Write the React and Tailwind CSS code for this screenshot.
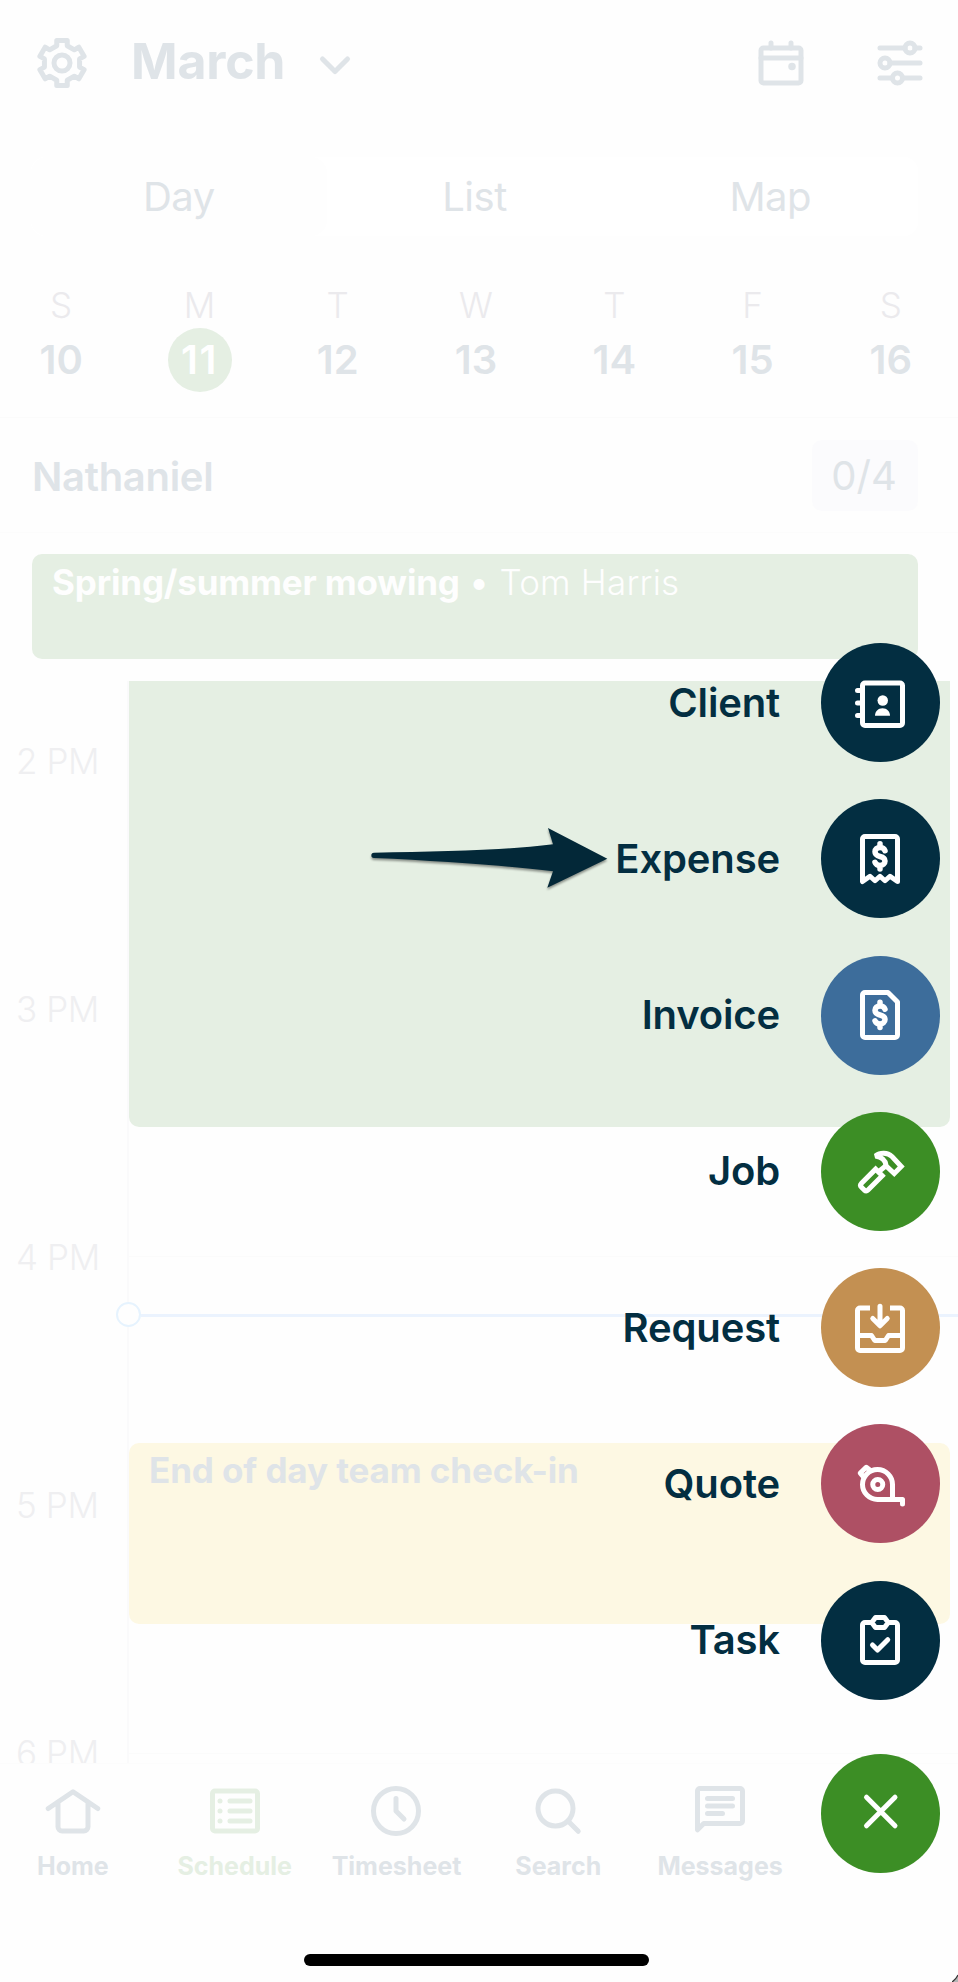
import React, { useState } from "react";

// Shared 24x24 stroke icon
const Icon = ({ children, className = "" }) => (
  <svg
    viewBox="0 0 24 24"
    className={`w-[60px] h-[60px] shrink-0 ${className}`}
    fill="none"
    stroke="currentColor"
    strokeWidth="2"
    strokeLinecap="round"
    strokeLinejoin="round"
  >
    {children}
  </svg>
);

const DOLLAR =
  "M12 6.900v1.400M14 9.700C13.700 8.900 13 8.400 12 8.400c-1.200 0-2 .7-2 1.700 0 1.200.8 1.600 2 1.900s2 .8 2 1.800c0 1.100-.9 1.800-2 1.800-1 0-1.700-.5-2-1.300M12 15.700V17";

const SettingsIcon = () => (
  <Icon>
    <g transform="translate(12 12)">
      <path d="M-2.1-6.9V-9H2.1V-6.9L4.93-5.27 6.74-6.32 8.84-2.68 7.03-1.63V1.63L8.84 2.68 6.74 6.32 4.93 5.27 2.1 6.9V9H-2.1V6.9L-4.93 5.27-6.74 6.32-8.84 2.68-7.03 1.63V-1.63L-8.84-2.68-6.74-6.32-4.93-5.27z" />
      <circle r="3.2" />
    </g>
  </Icon>
);

const CalendarIcon = () => (
  <Icon>
    <rect x="4" y="6" width="16" height="14" rx="1" />
    <path d="M4 10h16M8 4v2M16 4v2" />
    <circle cx="16.4" cy="13.4" r="1.5" fill="currentColor" stroke="none" />
  </Icon>
);

const FiltersIcon = () => (
  <Icon>
    <path d="M4 6h10M18 6h2M8 12h12M4 18h5M13 18h7" />
    <circle cx="16" cy="6" r="2" />
    <circle cx="6" cy="12" r="2" />
    <circle cx="11" cy="18" r="2" />
  </Icon>
);

const navItems = [
  {
    label: "Home",
    icon: (
      <Icon>
        <path d="M2.1 11 12 4.300 21.900 11M6 8.700V18.300A1.700 1.700 0 0 0 7.700 20h8.600a1.700 1.700 0 0 0 1.700-1.700V8.700" />
      </Icon>
    ),
  },
  {
    label: "Schedule",
    icon: (
      <Icon>
        <rect x="3" y="4" width="18" height="16" rx="1" />
        <path d="M6 8h0M6 12h0M6 16h0M10 8h8M10 12h8M10 16h8" />
      </Icon>
    ),
  },
  {
    label: "Timesheet",
    icon: (
      <Icon>
        <circle cx="12" cy="12" r="9" />
        <path d="M12 7v5l3.200 3.200" />
      </Icon>
    ),
  },
  {
    label: "Search",
    icon: (
      <Icon>
        <circle cx="11" cy="11" r="7" />
        <path d="M16 16l4.100 4.100" />
      </Icon>
    ),
  },
  {
    label: "Messages",
    icon: (
      <Icon>
        <path d="M3 19.500V4a1 1 0 0 1 1-1h16a1 1 0 0 1 1 1v12a1 1 0 0 1-1 1H5.500z" />
        <path d="M7 7h10M7 10h10M7 13h6" />
      </Icon>
    ),
  },
];

const actions = [
  {
    label: "Client",
    color: "bg-[#032e41]",
    icon: (
      <Icon className="mr-px">
        <rect x="5" y="4" width="16" height="17" rx="1" />
        <path d="M3 7h2M3 12h2M3 17h2" />
        <g fill="currentColor" stroke="none">
          <circle cx="13.100" cy="11" r="2.100" />
          <path d="M10 17.100c0-1.700 1.200-3 3-3s3 1.300 3 3z" />
        </g>
      </Icon>
    ),
  },
  {
    label: "Expense",
    color: "bg-[#032e41]",
    icon: (
      <Icon className="mr-px">
        <path d="M5 21V4a1 1 0 0 1 1-1h12a1 1 0 0 1 1 1v17l-3-2.100-2 1.800-2-1.800-2 1.800-2-1.800z" />
        <path d={DOLLAR} strokeWidth="2.200" transform="translate(0 -1)" />
      </Icon>
    ),
  },
  {
    label: "Invoice",
    color: "bg-[#3d6d9b]",
    icon: (
      <Icon className="mr-px">
        <path d="M5 4a1 1 0 0 1 1-1h9.200L19 6.800V20a1 1 0 0 1-1 1H6a1 1 0 0 1-1-1z" />
        <path d={DOLLAR} strokeWidth="2.200" />
      </Icon>
    ),
  },
  {
    label: "Job",
    color: "bg-[#3c8e25]",
    icon: (
      <Icon className="mr-px">
        <g transform="translate(12 12)" strokeLinejoin="miter">
          <path d="M-1.750-.75-7.400 4.900Q-8.200 5.700-7.400 6.500L-6.300 7.600Q-5.500 8.300-4.800 7.600L.9 1.900z" />
          <path d="M-.2 0 2.500-2.200" strokeLinecap="butt" />
          <path
            strokeMiterlimit="2"
            d="M-1.800-6C.2-7.600 3-7.400 4.800-5.800L8.500-1.800 5.700 1 2.500-2C2.300-4 .8-5.600-1.800-6z"
          />
        </g>
      </Icon>
    ),
  },
  {
    label: "Request",
    color: "bg-[#c39052]",
    icon: (
      <Icon className="mr-px">
        <path
          strokeLinecap="butt"
          d="M8 4H4a1 1 0 0 0-1 1v15a1 1 0 0 0 1 1h16a1 1 0 0 0 1-1V5a1 1 0 0 0-1-1h-4M3 15h5.600l1.300 2h4.200l1.300-2H21"
        />
        <path d="M12 3.300v7.700M9.100 8.200l2.900 2.900 2.900-2.900" />
      </Icon>
    ),
  },
  {
    label: "Quote",
    color: "bg-[#ae5064]",
    icon: (
      <Icon className="mr-px">
        <path d="M17 18.200v-6a6 6 0 1 0-6 6h10V20" />
        <circle cx="11.100" cy="12.200" r="2" />
        <path d="M5.300 9 4.100 7.600 6.500 5.300 7.900 6.400" />
      </Icon>
    ),
  },
  {
    label: "Task",
    color: "bg-[#032e41]",
    icon: (
      <Icon className="mr-px">
        <path d="M8.700 5H6a1 1 0 0 0-1 1v14a1 1 0 0 0 1 1h12a1 1 0 0 0 1-1V6a1 1 0 0 0-1-1h-2.700" />
        <path d="M10.200 3h3.600L15.300 5 13.800 7h-3.600L8.700 5z" />
        <path d="M9 14l2 2 4.100-4.100" />
      </Icon>
    ),
  },
];

const days = [
  ["S", 10],
  ["M", 11],
  ["T", 12],
  ["W", 13],
  ["T", 14],
  ["F", 15],
  ["S", 16],
];

const hours = ["2 PM", "3 PM", "4 PM", "5 PM", "6 PM"];

const App = () => {
  const [view, setView] = useState("Day");
  const [selected, setSelected] = useState(11);
  const [tab, setTab] = useState("Schedule");

  return (
    <div className="relative w-[958px] h-[1982px] overflow-hidden flex flex-col bg-[#fefefe] text-[#dfe4e8] font-['Inter',sans-serif]">
      {/* Header */}
      <header className="h-[157px] shrink-0 flex items-start pt-[33px] pl-[32px] pr-[28px]">
        <SettingsIcon />
        <h1 className="-mt-[2px] ml-[39px] text-[50px] leading-[60px] font-bold tracking-[-0.2px] w-[158px] whitespace-nowrap">
          March
        </h1>
        <Icon className="ml-[16px]">
          <path d="M7 10.400l5 5 5-5" />
        </Icon>
        <div className="ml-auto flex gap-[59px]">
          <CalendarIcon />
          <FiltersIcon />
        </div>
      </header>

      {/* View switcher */}
      <div className="ml-[31px] mr-[40px] h-[79px] shrink-0 flex rounded-[14px] bg-white">
        {["Day", "List", "Map"].map((name) => (
          <button
            key={name}
            onClick={() => setView(name)}
            className={`flex-1 rounded-[16px] text-[40px] leading-[79px] font-normal tracking-[-0.5px] ${
              view === name ? "bg-[#fefefe]" : ""
            }`}
          >
            {name}
          </button>
        ))}
      </div>

      {/* Week strip */}
      <div className="-ml-[8px] w-[968px] h-[182px] shrink-0 flex pt-[47px] border-b border-[#fbfbfb]">
        {days.map(([letter, num]) => (
          <button
            key={num}
            onClick={() => setSelected(num)}
            className="flex-1 flex flex-col items-center"
          >
            <span className="text-[35px] leading-[44px] font-light text-[#ebeaed]">{letter}</span>
            <span
              className={`mt-px size-[64px] rounded-full text-[40px] leading-[64px] font-semibold ${
                selected === num ? "ml-px pr-px tracking-[1.5px] bg-[#e5efe3] text-white" : ""
              }`}
            >
              {num}
            </span>
          </button>
        ))}
      </div>

      {/* Assignee */}
      <div className="h-[115px] shrink-0 flex items-center justify-between pl-[32px] pr-[40px] border-b border-[#fcfcfc]">
        <span className="mt-[3px] text-[40px] leading-[48px] font-semibold tracking-[-0.3px]">Nathaniel</span>
        <span className="w-[106px] h-[71px] rounded-[10px] bg-[#fbfbfd] pr-[2px] text-center text-[40px] leading-[71px]">
          0/4
        </span>
      </div>

      {/* All day visit */}
      <div className="mt-[21px] ml-[32px] mr-[40px] h-[105px] shrink-0 rounded-[10px] bg-[#e5efe3] text-[#fefefe] px-[20px] pt-[7px] text-[35px] leading-[42px] whitespace-nowrap">
        <span className="font-bold tracking-[-0.17px]">Spring/summer mowing</span>
        <span className="ml-[11px] mr-[12px] font-bold">•</span>
        <span className="font-light tracking-[0.2px]">Tom Harris</span>
      </div>

      {/* Day timeline */}
      <main className="mt-[22px] h-[1082px] shrink-0 overflow-hidden flex">
        <div className="w-[129px] shrink-0 pt-[59px] border-r-2 border-[#fafafb] text-[35px] leading-[42px] font-light tracking-[-0.4px] text-[#efeff1]">
          {hours.map((hour) => (
            <div key={hour} className="h-[248px] pl-[16px] whitespace-nowrap">
              {hour}
            </div>
          ))}
        </div>
        <div className="relative flex-1 pr-[8px] flex flex-col">
          <div className="h-[446px] shrink-0 rounded-b-[10px] bg-[#e5efe3]" />
          <div className="h-[130px] shrink-0 border-b border-[#fbfbfb] -mr-[8px]" />
          <div className="mt-[186px] h-[181px] shrink-0 rounded-[10px] bg-[#fdf8e3] px-[20px] pt-[6px] text-[35px] leading-[42px] font-bold tracking-[-0.1px] whitespace-nowrap">
            End of day team check-in
          </div>
          <div className="h-[130px] shrink-0 border-b border-[#fbfbfb] -mr-[8px]" />
          {/* current time marker */}
          <div className="absolute -left-[13px] right-0 top-[621px] flex items-center">
            <span className="size-[25px] rounded-full border-[2.5px] border-[#e6f3fe] bg-[#fefefe]" />
            <span className="flex-1 h-[3px] mt-[2px] bg-[#ebf3fe]" />
          </div>
        </div>
      </main>

      {/* Bottom tabs */}
      <nav className="h-[191px] shrink-0 -ml-[8px] flex pt-[17px] border-t border-[#fcfcfc]">
        {navItems.map((item) => (
          <button
            key={item.label}
            onClick={() => setTab(item.label)}
            className={`w-[161.8px] flex flex-col items-center ${
              tab === item.label ? "text-[#e5efe3]" : ""
            }`}
          >
            {item.icon}
            <span className="mt-[10px] text-[25px] leading-[30px] font-bold">{item.label}</span>
          </button>
        ))}
      </nav>
      <div className="w-[345px] h-[12px] shrink-0 ml-[304px] rounded-full bg-black" />

      {/* Arrow pointing at the Expense action */}
      <svg
        viewBox="0 0 780 330"
        className="absolute left-[360px] top-[800px] w-[260px] h-[110px] drop-shadow-[0_2px_1px_rgba(0,0,0,0.4)]"
      >
        <path
          d="M42 158C250 155 450 150 579 133L564 84 742 176 562 263 579 214C450 198 250 183 42 174A8 8 0 0 1 42 158z"
          fill="#032838"
        />
      </svg>

      {/* Create menu */}
      <div className="absolute right-[18px] top-[643px] flex flex-col items-end text-[#032e41]">
        {actions.map((action) => (
          <button key={action.label} className="flex items-center gap-[41px] mb-[37.300px]">
            <span className="text-[40px] leading-[48px] font-semibold tracking-[-0.15px]">{action.label}</span>
            <span
              className={`size-[119px] rounded-full flex items-center justify-center text-white ${action.color}`}
            >
              {action.icon}
            </span>
          </button>
        ))}
        <button className="mt-[17px] size-[119px] rounded-full flex items-center justify-center bg-[#3c8e25] text-white">
          <Icon>
            <path d="M6.200 5.300l11.400 11.400M17.600 5.300 6.200 16.700" />
          </Icon>
        </button>
      </div>

      {/* Device corner */}
      <svg viewBox="0 0 6 8" className="absolute right-0 bottom-0 w-[6px] h-[8px]">
        <path d="M6 1Q4 5.500 0 8h6z" fill="#b5b5b5" />
        <path d="M6 1Q4 5.500 0 8" fill="none" stroke="#333" strokeWidth="1.200" />
      </svg>
    </div>
  );
};

export default App;
